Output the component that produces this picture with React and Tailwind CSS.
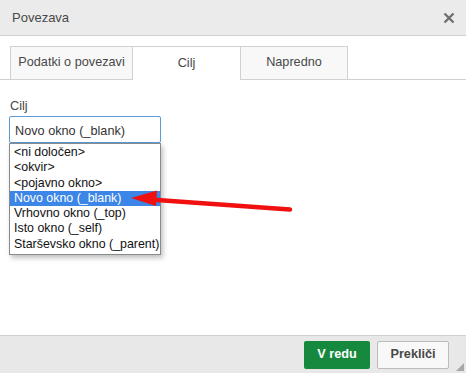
export default function App() {
  const items = [
    "<ni določen>",
    "<okvir>",
    "<pojavno okno>",
    "Novo okno (_blank)",
    "Vrhovno okno (_top)",
    "Isto okno (_self)",
    "Starševsko okno (_parent)",
  ];
  return (
    <div className="relative w-[466px] h-[373px] bg-white flex flex-col text-[12.7px] text-[#333]" style={{ fontFamily: '"Liberation Sans", Arial, sans-serif' }}>
      <div className="h-[36px] shrink-0 bg-[#ebebeb] border-b border-[#d1d1d1] flex items-center justify-between pl-[12px] pr-[10px]">
        <span className="text-[13px] text-[#484848]">Povezava</span>
        <svg width="12" height="12" viewBox="0 0 12 12" className="mr-[1px]">
          <path d="M1.5 1.5 L10.5 10.5 M10.5 1.5 L1.5 10.5" stroke="#707070" strokeWidth="2.4" />
        </svg>
      </div>
      <div className="pt-[10px] flex">
        <div className="w-[10px] border-b border-[#d1d1d1]" />
        <div className="w-[123px] h-[34px] bg-[#f8f8f8] border border-[#d1d1d1] flex items-center justify-center text-[#484848]">Podatki o povezavi</div>
        <div className="w-[107px] h-[34px] bg-white border-t border-[#d1d1d1] flex items-center justify-center text-[#484848]">Cilj</div>
        <div className="w-[108px] h-[34px] bg-[#f8f8f8] border border-[#d1d1d1] flex items-center justify-center text-[#484848]">Napredno</div>
        <div className="flex-1 border-b border-[#d1d1d1]" />
      </div>
      <div className="flex-1 pl-[9px] pt-[18px]">
        <div className="pl-[1px] text-[#484848] leading-[16px]">Cilj</div>
        <div className="mt-[2px] w-[152px] h-[27px] border border-[#5a9ad8] rounded-[2px] flex items-end pl-[5px] pb-[1px] text-[#333]">Novo okno (_blank)</div>
        <div className="w-[152px] border border-[#8a8a8a] bg-white shadow-[2px_3px_5px_rgba(0,0,0,0.25)] pt-[1px] pb-[2px]">
          {items.map((t, i) => (
            <div key={i} className={"h-[15.3px] leading-[15px] pl-[4px] whitespace-nowrap text-[12.4px] " + (i === 3 ? "bg-[#3b86e6] text-white" : "text-[#111]")}>{t}</div>
          ))}
        </div>
      </div>
      <div className="h-[38px] shrink-0 bg-[#e8e8e8] border-t border-[#d1d1d1] flex items-center justify-end pr-[17px] gap-[7px] relative">
        <div className="w-[66px] h-[28px] bg-[#17893f] rounded-[2px] text-white font-bold flex items-center justify-center">V redu</div>
        <div className="w-[72px] h-[28px] bg-[#f8f8f8] border border-[#bcbcbc] rounded-[2px] text-[#484848] font-bold flex items-center justify-center">Prekliči</div>
        <svg width="8" height="8" viewBox="0 0 8 8" className="absolute right-[2px] bottom-[2px]">
          <path d="M8 0 L8 8 L0 8 Z" fill="#a8a8a8" />
        </svg>
      </div>
      <svg className="absolute left-0 top-0 pointer-events-none" width="466" height="373" viewBox="0 0 466 373">
        <path d="M150 199.5 L290 209.5" stroke="#f01010" strokeWidth="4.5" strokeLinecap="round" />
        <path d="M131 198 L157 190.5 L156 206 Z" fill="#f01010" />
      </svg>
    </div>
  );
}
